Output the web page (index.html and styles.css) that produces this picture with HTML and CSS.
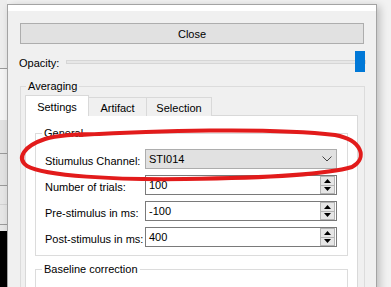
FILE: index.html
```html
<!DOCTYPE html>
<html lang="en">
<head>
  <meta charset="UTF-8" />
  <title>Averaging</title>
  <link rel="stylesheet" href="styles.css">
</head>
<body>
  <div class="desk">

    <!-- window behind the dialog -->
    <div class="backwin">
      <div class="bw-a"></div>
      <div class="bw-line"></div>
      <div class="bw-b"></div>
      <div class="bw-c"></div>
      <div class="bw-line"></div>
      <div class="bw-c2"></div>
      <div class="bw-line"></div>
      <div class="bw-d"></div>
      <div class="bw-line light"></div>
      <div class="bw-d2"></div>
      <div class="bw-line"></div>
      <div class="bw-e"></div>
      <div class="bw-black"></div>
    </div>

    <div class="dialog">
      <div class="dlg-top"></div>
      <div class="dlg-body">
        <button class="btn-close">Close</button>

        <div class="opacity-row">
          <span class="opacity-label">Opacity:</span>
          <div class="slider">
            <div class="track"></div>
            <div class="thumb"></div>
          </div>
        </div>

        <fieldset class="group outer">
          <legend>Averaging</legend>

          <div class="tabs">
            <div class="tab active">Settings</div>
            <div class="tab tab-artifact">Artifact</div>
            <div class="tab tab-selection">Selection</div>
          </div>

          <div class="pane">
            <fieldset class="group inner">
              <legend>General</legend>
              <div class="form">
                <label>Stiumulus Channel:</label>
                <div class="combo">
                  <span>STI014</span>
                  <svg width="10" height="6" viewBox="0 0 10 6"><polyline points="0.5,0.5 5,5 9.5,0.5" fill="none" stroke="#444" stroke-width="1"/></svg>
                </div>

                <label>Number of trials:</label>
                <div class="spin">
                  <span>100</span>
                  <div class="spin-btns">
                    <div class="sb"><svg width="7" height="4" viewBox="0 0 7 4"><polygon points="3.5,0 7,4 0,4" fill="#000"/></svg></div>
                    <div class="sb"><svg width="7" height="4" viewBox="0 0 7 4"><polygon points="0,0 7,0 3.5,4" fill="#000"/></svg></div>
                  </div>
                </div>

                <label>Pre-stimulus in ms:</label>
                <div class="spin">
                  <span>-100</span>
                  <div class="spin-btns">
                    <div class="sb"><svg width="7" height="4" viewBox="0 0 7 4"><polygon points="3.5,0 7,4 0,4" fill="#000"/></svg></div>
                    <div class="sb"><svg width="7" height="4" viewBox="0 0 7 4"><polygon points="0,0 7,0 3.5,4" fill="#000"/></svg></div>
                  </div>
                </div>

                <label>Post-stimulus in ms:</label>
                <div class="spin">
                  <span>400</span>
                  <div class="spin-btns">
                    <div class="sb"><svg width="7" height="4" viewBox="0 0 7 4"><polygon points="3.5,0 7,4 0,4" fill="#000"/></svg></div>
                    <div class="sb"><svg width="7" height="4" viewBox="0 0 7 4"><polygon points="0,0 7,0 3.5,4" fill="#000"/></svg></div>
                  </div>
                </div>
              </div>
            </fieldset>

            <fieldset class="group inner baseline">
              <legend>Baseline correction</legend>
              <div class="filler"></div>
            </fieldset>
          </div>
        </fieldset>
      </div>
    </div>
  </div>

  <!-- red hand-drawn mark over the stimulus channel row -->
  <svg class="scribble" width="391" height="287" viewBox="0 0 391 287">
    <path d="M80 135 C150 131, 270 127, 335 135 C362 140, 368 158, 352 167 C325 175, 260 178, 185 179 C115 180, 45 176, 27 166 C16 158, 24 146, 45 139 C58 135, 80 134, 100 134"
          fill="none" stroke="#e21b1b" stroke-width="4" stroke-linecap="round" stroke-linejoin="round"/>
  </svg>
</body>
</html>
```

FILE: styles.css
```css
* { box-sizing: border-box; }

body {
  margin: 0;
  width: 391px;
  height: 287px;
  overflow: hidden;
  background: #f2f2f2;
  font-family: "Liberation Sans", Arial, sans-serif;
  font-size: 11px;
  color: #000;
}

.desk {
  display: flex;
  align-items: flex-start;
  height: 287px;
}

/* background window */
.backwin {
  width: 7px;
  height: 287px;
  display: flex;
  flex-direction: column;
  flex-shrink: 0;
}
.bw-a { height: 68px; background: #ededed; }
.bw-line { height: 1px; background: #9a9a9a; }
.bw-line.light { background: #d2d2d2; }
.bw-b { height: 51px; background: #f4f4f4; }
.bw-c { height: 33px; background: #e2e2e2; }
.bw-c2 { height: 31px; background: #e2e2e2; }
.bw-d { height: 18px; background: #e6e6e6; }
.bw-d2 { height: 19px; background: #e6e6e6; }
.bw-e { height: 6px; background: #e6e6e6; }
.bw-black { flex: 1; background: #000; }

/* dialog */
.dialog {
  width: 370px;
  height: 290px;
  margin-top: 4px;
  border: 1px solid #a3a3a3;
  border-bottom: none;
  background: #f0f0f0;
  box-shadow: 3px 2px 8px rgba(0, 0, 0, 0.22);
  flex-shrink: 0;
}

.dlg-top {
  height: 6px;
  background: #fff;
}

.dlg-body {
  padding: 12px 12px 0 12px;
}

.btn-close {
  display: block;
  width: 100%;
  height: 21px;
  border: 1px solid #adadad;
  background: #e1e1e1;
  font-family: inherit;
  font-size: 11px;
  color: #000;
  padding: 0;
}

.opacity-row {
  display: flex;
  align-items: center;
  height: 21px;
  margin: 7px -2px 0 -1px;
}

.opacity-label {
  width: 47px;
  padding-top: 3px;
}

.slider {
  flex: 1;
  display: grid;
  align-items: center;
  height: 21px;
}
.track {
  grid-area: 1 / 1;
  height: 4px;
  background: #e7e7e7;
  border: 1px solid #d6d6d6;
}
.thumb {
  grid-area: 1 / 1;
  justify-self: end;
  width: 10px;
  height: 21px;
  margin-right: 1px;
  background: #0078d7;
}

/* group boxes */
.group {
  margin: 0;
  min-inline-size: 0;
  border: 1px solid #dcdcdc;
}
.group legend {
  line-height: 14px;
  padding: 0 2px;
}

.outer {
  margin: 7px -1px 0 0;
  padding: 2px 6px 0 4px;
}
.outer legend { margin-left: 1px; }

/* tabs */
.tabs {
  display: flex;
  align-items: flex-end;
  height: 21px;
}
.tab {
  height: 19px;
  border: 1px solid #d9d9d9;
  border-bottom: none;
  background: #f0f0f0;
  text-align: center;
  line-height: 18px;
  padding-top: 1px;
}
.tab.active {
  position: relative;
  z-index: 1;
  width: 64px;
  height: 21px;
  background: #fff;
  line-height: 20px;
}
.tab-artifact { width: 59px; margin-left: -1px; }
.tab-selection { width: 66px; margin-left: -1px; }

.pane {
  margin-top: -1px;
  background: #fff;
  border: 1px solid #d9d9d9;
  padding: 10px 9px 0 9px;
  height: 200px;
}

.inner {
  padding: 9px 9px 8px 9px;
}
.inner legend { margin-left: -3px; }

.baseline { margin-top: 6px; }
.filler { height: 60px; }

.form {
  display: grid;
  grid-template-columns: 100px 192px;
  grid-auto-rows: 20px;
  row-gap: 6px;
  align-items: center;
}
.form label {
  padding-top: 3px;
}

.combo {
  height: 20px;
  border: 1px solid #adadad;
  background: #e1e1e1;
  display: flex;
  align-items: center;
  justify-content: space-between;
  padding: 0 4px 0 3px;
}

.spin {
  height: 20px;
  border: 1px solid #7a7a7a;
  background: #fff;
  display: flex;
  align-items: center;
  justify-content: space-between;
  padding: 0 1px 0 3px;
}
.spin-btns {
  display: flex;
  flex-direction: column;
  width: 15px;
  height: 18px;
}
.sb {
  flex: 1;
  display: flex;
  align-items: center;
  justify-content: center;
  background: #e6e6e6;
  border: 1px solid #b4b4b4;
}
.sb + .sb { border-top: none; }

.scribble {
  position: absolute;
  top: 0;
  left: 0;
  pointer-events: none;
}
```
